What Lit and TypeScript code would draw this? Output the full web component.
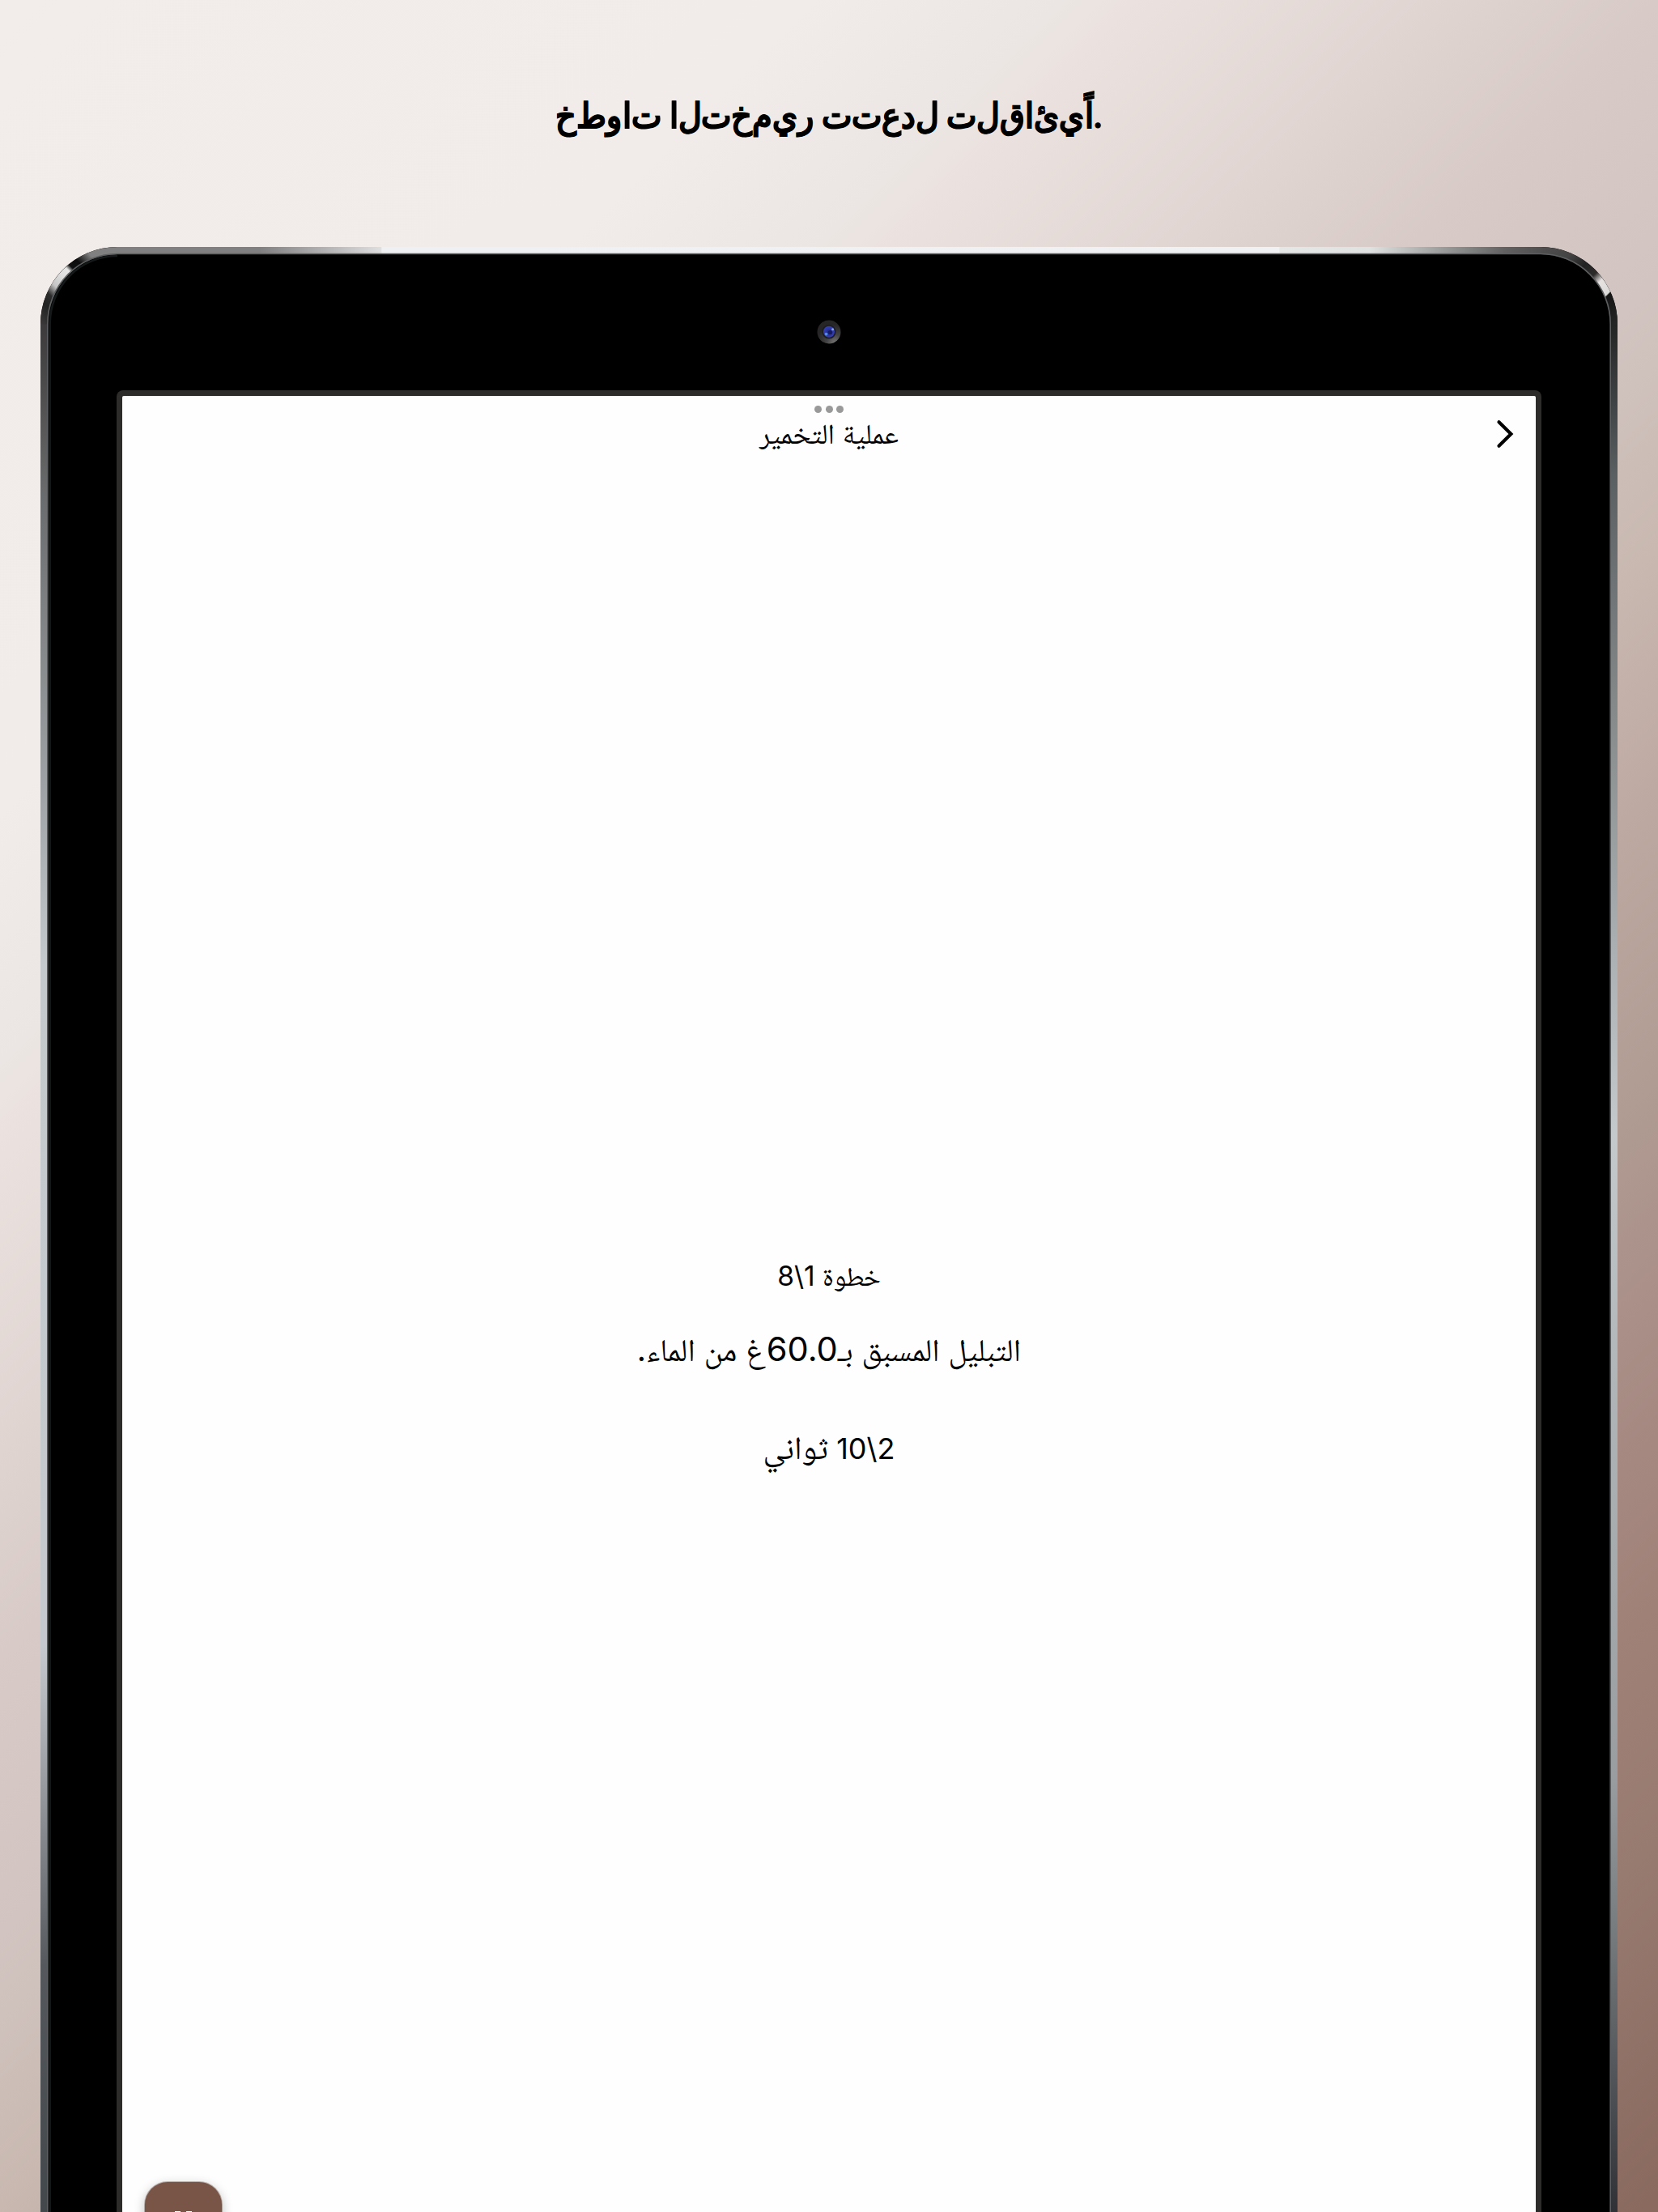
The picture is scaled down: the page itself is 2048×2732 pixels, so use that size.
import { LitElement, html, svg, css } from "lit";

const TOP = [[0, "#808080"], [10, "#808080"], [18.5, "#dedede"], [18.6, "#eef0f1"], [81.6, "#f0f1f2"], [81.7, "#e4e7e6"], [88, "#dfe2e1"], [97.5, "#606160"], [100, "#505050"]];
const LEFT = [[0, "#3c3a3a"], [9, "#6a6b6c"], [25, "#a0a4a6"], [34, "#c4cacc"], [70, "#c5c9cf"], [75, "#a8acb0"], [87, "#55595d"], [100, "#43484c"]];
const RIGHT = [[0, "#232424"], [8, "#5a5f62"], [20, "#848889"], [34, "#adb3b5"], [43, "#c4c9cc"], [56, "#b0b6b8"], [77, "#999da0"], [85, "#777c7e"], [100, "#2f3137"]];
const CORNER_L = [[0, "#3c3a3a"], [16, "#222"], [25, "#2c2c2c"], [34, "#c4c4c4"], [45, "#dedede"], [53, "#e6e6e6"], [57, "#111"], [65, "#0c0c0c"], [77, "#808080"], [100, "#808080"]];
const CORNER_R = [[0, "#505050"], [24, "#444"], [40, "#222"], [53, "#2e2b2b"], [61, "#e6e2e1"], [74, "#dcdad9"], [75, "#141414"], [100, "#262727"]];

const stops = (list: any[]) => list.map(([o, c]) => svg`<stop offset="${o}%" stop-color=${c}></stop>`);

class TabletFrame extends LitElement {
  static styles = css`
    :host { display: block; position: absolute; inset: 0; }
    svg { display: block; width: 1948px; height: 2427px; }
  `;
  render() {
    return html`<svg viewBox="50 305 1948 2427" fill="none">
      <defs>
        <linearGradient id="t" gradientUnits="userSpaceOnUse" x1="145" y1="0" x2="1903" y2="0">${stops(TOP)}</linearGradient>
        <linearGradient id="l" gradientUnits="userSpaceOnUse" x1="0" y1="400" x2="0" y2="2732">${stops(LEFT)}</linearGradient>
        <linearGradient id="r" gradientUnits="userSpaceOnUse" x1="0" y1="400" x2="0" y2="2732">${stops(RIGHT)}</linearGradient>
        <linearGradient id="cl" gradientUnits="userSpaceOnUse" x1="50" y1="400" x2="145" y2="305">${stops(CORNER_L)}</linearGradient>
        <linearGradient id="cr" gradientUnits="userSpaceOnUse" x1="1903" y1="305" x2="1998" y2="400">${stops(CORNER_R)}</linearGradient>
        <radialGradient id="ring" gradientUnits="userSpaceOnUse" cx="1031" cy="423" r="22">
          <stop offset="0" stop-color="#747474"></stop><stop offset=".45" stop-color="#444"></stop><stop offset="1" stop-color="#262627"></stop>
        </radialGradient>
        <radialGradient id="lens" gradientUnits="userSpaceOnUse" cx="1024" cy="410" r="7.5">
          <stop offset="0" stop-color="#1c2178"></stop><stop offset=".5" stop-color="#2a35a0"></stop><stop offset="1" stop-color="#3743b4"></stop>
        </radialGradient>
      </defs>
      <path d="M50 2733V400A95 95 0 0 1 145 305H1903A95 95 0 0 1 1998 400V2733Z" fill="#000"></path>
      <path d="M61.7 2733V400A83.3 84 0 0 1 145 316" stroke="#151919" stroke-width="2.5"></path>
      <path d="M54.5 2733V400" stroke="url(#l)" stroke-width="9"></path>
      <path d="M1993.5 2733V400" stroke="url(#r)" stroke-width="9"></path>
      <path d="M144.5 309.5H1903.5" stroke="url(#t)" stroke-width="9"></path>
      <path d="M54.5 400.5A90.5 91 0 0 1 145 309.5" stroke="url(#cl)" stroke-width="9"></path>
      <path d="M1903 309.5A90.5 91 0 0 1 1993.5 400.5" stroke="url(#cr)" stroke-width="9"></path>
      <path d="M58.8 2733V400A86.2 86.5 0 0 1 145 313.5H1903A86.2 86.5 0 0 1 1989.2 400V2733" stroke="#5c5e60" stroke-width="1.6"></path>
      <circle cx="1024" cy="410" r="14.5" fill="url(#ring)"></circle>
      <circle cx="1024" cy="409.8" r="8.6" fill="#1c1c20"></circle>
      <circle cx="1024" cy="409.8" r="7" fill="url(#lens)"></circle>
      <circle cx="1025.5" cy="410.5" r="2.6" fill="#161a5e"></circle>
      <circle cx="1020.6" cy="412.6" r="1.9" fill="#4b8fe0"></circle>
      <circle cx="1028.6" cy="406.8" r="1.5" fill="#86a4ee"></circle>
    </svg>`;
  }
}
customElements.define("tablet-frame", TabletFrame);

class AppRoot extends LitElement {
  static styles = css`
    :host { display: block; }
    .page {
      width: 2048px; height: 2732px; overflow: hidden; box-sizing: border-box;
      display: flex; flex-direction: column; align-items: center;
      color: #000; font-family: Inter, "Noto Naskh Arabic", "DejaVu Sans", sans-serif;
      background: linear-gradient(135deg, #f2edea 0%, #f1ece9 21%, #ebe6e3 27.5%, #ebe2df 29.3%, #d8cbc7 42.8%, #d2c5c1 50%, #c8b8b0 57%, #bea9a2 63.2%, #b09c93 70.7%, #aa9089 75.8%, #a08178 84.2%, #977a70 90.4%, #8a6a5f 99.5%);
    }
    .headline {
      height: 305px; flex: none; margin: 0; display: flex; align-items: center; justify-content: center;
      box-sizing: border-box; padding-bottom: 19px;
      font-family: Roboto, sans-serif; font-size: 43px; font-weight: 700; white-space: nowrap;
      -webkit-text-stroke: .9px #000;
    }
    .headline span {
      display: block; transform: scaleX(.925);
      direction: ltr; unicode-bidi: bidi-override;
      font-feature-settings: "init" 0, "medi" 0, "fina" 0, "rlig" 0, "liga" 0;
    }
    .tablet {
      position: relative; width: 1948px; flex: 1; box-sizing: border-box;
      padding: 177px 94px 0 94px; display: flex;
    }
    .bezel {
      position: relative; flex: 1; box-sizing: border-box; display: flex;
      background: #2d2c2b; border-radius: 8px 8px 0 0; padding: 7px 7px 0;
    }
    .screen {
      flex: 1; background: #fefefe; border-radius: 2px 2px 0 0; overflow: hidden;
      display: flex; flex-direction: column; align-items: center;
    }
    .dots { display: flex; gap: 4.5px; padding-top: 12px; }
    .dots i { width: 9px; height: 9px; border-radius: 50%; background: #999; }
    .bar {
      align-self: stretch; height: 51px; display: grid; grid-template-columns: 78px 1fr 78px;
      align-items: center; justify-items: center;
    }
    .title { font-size: 35px; line-height: 50px; padding-bottom: 2px; }
    .chev { width: 24px; height: 36px; }
    .steps {
      flex: 1; display: flex; flex-direction: column; align-items: center; padding-top: 985px;
    }
    .line { white-space: nowrap; direction: rtl; }
    .step { font-size: 33.5px; line-height: 60px; }
    .what { font-size: 39px; line-height: 60px; margin-top: 31px; }
    .amount { font-size: 41.5px; line-height: 1; padding-left: 2px; }
    .time { font-size: 36px; line-height: 60px; margin-top: 62px; }
    .unit { font-size: 40px; line-height: 1; }
    .foot { align-self: stretch; display: flex; flex: none; height: 37px; padding-left: 28px; }
    .pause {
      width: 95px; height: 95px; border: 0; padding: 36px 0 0; border-radius: 28px; background: #795548;
      display: flex; justify-content: center; gap: 7px; flex: none;
      box-shadow: 0 4px 14px rgba(0, 0, 0, .28), 0 0 0 1px rgba(190, 175, 168, .8);
    }
    .pause i { width: 7px; height: 22px; background: #fff; }
  `;
  render() {
    return html`<div class="page">
      <h1 class="headline"><span>خطوات التخمير تتعدل تلقائياً.</span></h1>
      <div class="tablet">
        <tablet-frame></tablet-frame>
        <div class="bezel"><div class="screen">
          <div class="dots"><i></i><i></i><i></i></div>
          <div class="bar">
            <span></span>
            <div class="title line">عملية التخمير</div>
            <svg class="chev" viewBox="0 0 24 36" fill="none" stroke="#000" stroke-width="4.2">
              <path d="M5.5 3.3L20.4 18L5.5 32.7" stroke-linecap="round"></path>
            </svg>
          </div>
          <div class="steps">
            <div class="line step">خطوة 1\\8</div>
            <div class="line what">التبليل المسبق بـ<span class="amount">60.0</span>غ من الماء.</div>
            <div class="line time">2\\10 <span class="unit">ثواني</span></div>
          </div>
          <div class="foot"><button class="pause"><i></i><i></i></button></div>
        </div></div>
      </div>
    </div>`;
  }
}
customElements.define("app-root", AppRoot);
